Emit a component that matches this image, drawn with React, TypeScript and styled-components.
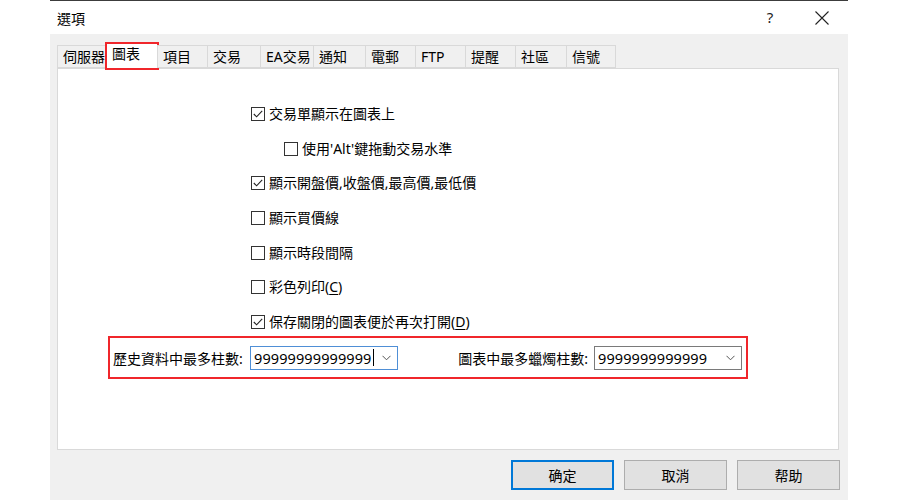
import React, { ReactElement } from 'react';
import styled, { createGlobalStyle } from 'styled-components';

const GlobalStyle = createGlobalStyle`
    html, body {
        margin: 0;
        padding: 0;
        background: #ffffff;
    }
    body {
        font-family: "Noto Sans", "Noto Sans CJK TC", sans-serif;
        font-size: 14px;
        color: #000;
    }
`;

const Page = styled.div`
    width: 900px;
    height: 500px;
    overflow: hidden;
    background: #ffffff;
`;

const Dialog = styled.div`
    margin-left: 50px;
    width: 798px;
    height: 500px;
    display: flex;
    flex-direction: column;
    border-top: 1px solid #3c3c3c;
    box-sizing: border-box;
`;

const TitleBar = styled.div`
    height: 33px;
    background: #ffffff;
    display: flex;
    align-items: center;
    padding-left: 7px;
    font-size: 14px;
    line-height: 1;

    .title {
        flex: 1;
        padding-top: 2px;
    }
    .help {
        width: 14px;
        font-family: "Segoe UI", "Noto Sans", sans-serif;
        font-size: 15px;
        color: #222;
        margin-right: 37px;
        text-align: center;
    }
    .close {
        width: 16px;
        height: 16px;
        margin-right: 18px;
    }
`;

const Body = styled.div`
    flex: 1;
    background: #f0f0f0;
    padding: 11px 9px 0 7px;
    display: flex;
    flex-direction: column;
`;

const TabStrip = styled.div`
    display: flex;
    align-items: flex-end;
    height: 23px;
    position: relative;
    z-index: 1;
`;

const Tab = styled.div<{ $active?: boolean; $width: number }>`
    box-sizing: border-box;
    width: ${(p) => p.$width}px;
    height: ${(p) => (p.$active ? '26px' : '23px')};
    margin-bottom: ${(p) => (p.$active ? '-1px' : '0')};
    padding-left: 5px;
    padding-top: ${(p) => (p.$active ? '1px' : '2px')};
    background: ${(p) => (p.$active ? '#ffffff' : '#f0f0f0')};
    border: 1px solid #d9d9d9;
    border-bottom: ${(p) => (p.$active ? 'none' : '1px solid #d9d9d9')};
    margin-right: -1px;
    outline: ${(p) => (p.$active ? '2px solid #f0262b' : 'none')};
    outline-offset: -1px;
    font-size: 14px;
    line-height: 18px;
    white-space: nowrap;
    overflow: hidden;
`;

const Panel = styled.div`
    height: 382px;
    background: #ffffff;
    border: 1px solid #d9d9d9;
    box-sizing: border-box;
    padding: 28px 0 0 50px;
    display: flex;
    flex-direction: column;
`;

const Options = styled.div`
    padding-left: 143px;
    display: flex;
    flex-direction: column;
`;

const OptionRow = styled.label<{ $indent?: boolean }>`
    height: 34.6px;
    display: flex;
    align-items: center;
    padding-left: ${(p) => (p.$indent ? '33px' : '0')};
    font-size: 14px;
    line-height: 1;
    u {
        text-decoration: underline;
        text-underline-offset: 2px;
    }
`;

const Box = styled.span`
    width: 14px;
    height: 14px;
    box-sizing: border-box;
    border: 1px solid #333333;
    background: #fff;
    margin-right: 4px;
    display: flex;
    align-items: center;
    justify-content: center;
    flex-shrink: 0;
`;

const FieldRow = styled.div`
    margin-top: -3px;
    width: 640px;
    height: 43px;
    box-sizing: border-box;
    border: 2px solid #f0262b;
    display: flex;
    align-items: center;
    padding: 0 4px 0 3px;
    font-size: 14px;
`;

const FieldLabel = styled.span<{ $width?: string }>`
    width: ${(p) => p.$width || 'auto'};
    margin-right: 6px;
    white-space: nowrap;
`;

const Spacer = styled.div`
    flex: 1;
`;

const Combo = styled.div<{ $focused?: boolean }>`
    width: 148px;
    height: 24px;
    box-sizing: border-box;
    border: 1px solid ${(p) => (p.$focused ? '#4f8fd6' : '#7a7a7a')};
    background: #fff;
    display: flex;
    align-items: center;
    padding: 0 6px 0 3px;

    .value {
        flex: 1;
        font-family: "Noto Sans", sans-serif;
        font-size: 14.5px;
        letter-spacing: 0.1px;
        display: flex;
        align-items: center;
    }
    .caret {
        width: 1px;
        height: 17px;
        background: #000;
        margin-left: 1px;
    }
`;

const Footer = styled.div`
    display: flex;
    justify-content: flex-end;
    gap: 10px;
    padding-top: 10px;
    margin-right: -1px;
`;

const Button = styled.button<{ $primary?: boolean }>`
    width: 103px;
    height: 30px;
    box-sizing: border-box;
    background: #e1e1e1;
    border: ${(p) => (p.$primary ? '2px solid #0078d7' : '1px solid #adadad')};
    font-family: "Noto Sans CJK TC", "Noto Sans", sans-serif;
    font-size: 14px;
    color: #000;
    padding: 0;
`;

const Check = (): ReactElement => (
    <svg width="12" height="12" viewBox="0 0 12 12">
        <path d="M1.8 6 L4.6 8.8 L10.2 2.8" fill="none" stroke="#222" strokeWidth="1.1" />
    </svg>
);

const Chevron = (): ReactElement => (
    <svg width="9" height="6" viewBox="0 0 9 6">
        <path d="M0.5 0.8 L4.5 4.8 L8.5 0.8" fill="none" stroke="#555" strokeWidth="1" />
    </svg>
);

const tabs: [string, number][] = [
    ['伺服器', 50],
    ['圖表', 52],
    ['項目', 51],
    ['交易', 54],
    ['EA交易', 54],
    ['通知', 53],
    ['電郵', 51],
    ['FTP', 51],
    ['提醒', 51],
    ['社區', 52],
    ['信號', 50],
];

const options: { text: ReactElement | string; checked: boolean; indent?: boolean }[] = [
    { text: '交易單顯示在圖表上', checked: true },
    { text: "使用'Alt'鍵拖動交易水準", checked: false, indent: true },
    { text: '顯示開盤價,收盤價,最高價,最低價', checked: true },
    { text: '顯示買價線', checked: false },
    { text: '顯示時段間隔', checked: false },
    { text: <>彩色列印(<u>C</u>)</>, checked: false },
    { text: <>保存關閉的圖表便於再次打開(<u>D</u>)</>, checked: true },
];

const App = (): ReactElement => (
    <Page>
        <GlobalStyle />
        <Dialog>
            <TitleBar>
                <span className="title">選項</span>
                <span className="help">?</span>
                <svg className="close" viewBox="0 0 16 16">
                    <path d="M1.5 1.5 L14.5 14.5 M14.5 1.5 L1.5 14.5" stroke="#222" strokeWidth="1.1" />
                </svg>
            </TitleBar>
            <Body>
                <TabStrip>
                    {tabs.map(([t, w]) => (
                        <Tab key={t} $width={w} $active={t === '圖表'}>{t}</Tab>
                    ))}
                </TabStrip>
                <Panel>
                    <Options>
                        {options.map((o, i) => (
                            <OptionRow key={i} $indent={o.indent}>
                                <Box>{o.checked && <Check />}</Box>
                                <span>{o.text}</span>
                            </OptionRow>
                        ))}
                    </Options>
                    <FieldRow>
                        <FieldLabel $width="131px">歷史資料中最多柱數:</FieldLabel>
                        <Combo $focused>
                            <span className="value">99999999999999<span className="caret" /></span>
                            <Chevron />
                        </Combo>
                        <Spacer />
                        <FieldLabel>圖表中最多蠟燭柱數:</FieldLabel>
                        <Combo>
                            <span className="value">9999999999999</span>
                            <Chevron />
                        </Combo>
                    </FieldRow>
                </Panel>
                <Footer>
                    <Button $primary>确定</Button>
                    <Button>取消</Button>
                    <Button>帮助</Button>
                </Footer>
            </Body>
        </Dialog>
    </Page>
);

export default App;
